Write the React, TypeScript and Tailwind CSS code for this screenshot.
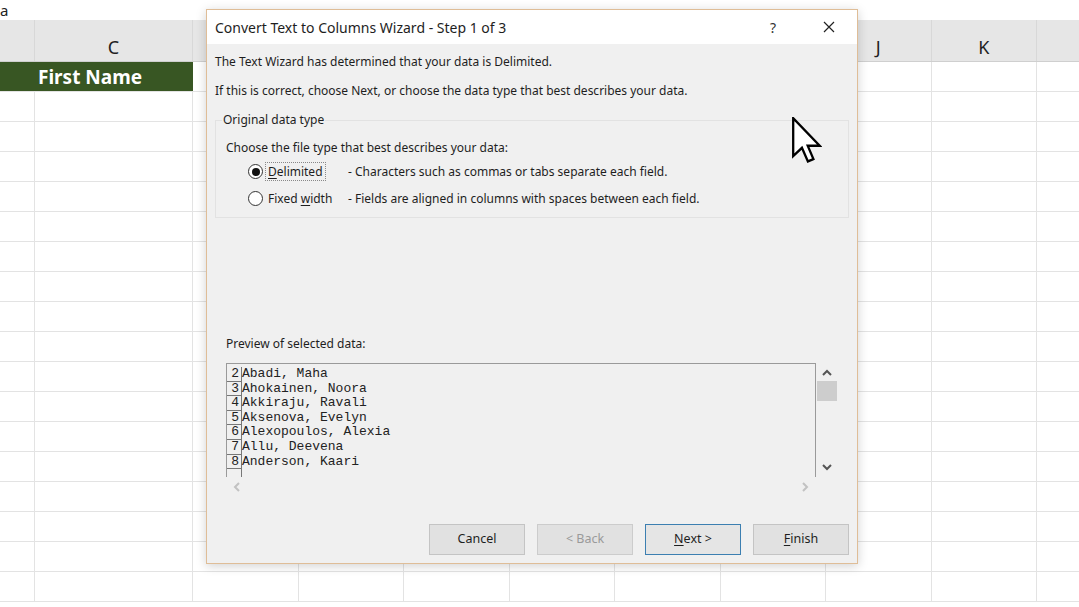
import React from 'react';

const cols = [
  { label: '', w: 35 },
  { label: 'C', w: 158 },
  { label: 'D', w: 105.5 },
  { label: 'E', w: 105.5 },
  { label: 'F', w: 105.5 },
  { label: 'G', w: 105.5 },
  { label: 'H', w: 105.5 },
  { label: 'I', w: 105.5 },
  { label: 'J', w: 105.5 },
  { label: 'K', w: 105.5 },
  { label: 'L', w: 105.5 },
];

const preview = [
  ['2', 'Abadi, Maha'],
  ['3', 'Ahokainen, Noora'],
  ['4', 'Akkiraju, Ravali'],
  ['5', 'Aksenova, Evelyn'],
  ['6', 'Alexopoulos, Alexia'],
  ['7', 'Allu, Deevena'],
  ['8', 'Anderson, Kaari'],
];

const ui = { fontFamily: '"Noto Sans", "Open Sans", sans-serif' };
const mono = { fontFamily: '"Liberation Mono", "Courier New", monospace' };

const Sheet: React.FC = () => (
  <div className="flex flex-col">
    <div className="h-[20px] bg-white text-[15px] leading-[20px] text-[#222]">a</div>
    <div className="flex h-[42px] bg-[#e6e6e6] border-b border-[#cfcfcf]">
      {cols.map((c, i) => (
        <div
          key={i}
          style={{ width: c.w }}
          className="shrink-0 border-r border-[#d8d8d8] flex items-center justify-center text-[18px] text-[#222] pt-[14px]"
        >
          {c.label}
        </div>
      ))}
    </div>
    {Array.from({ length: 18 }).map((_, r) => (
      <div key={r} className="flex h-[30px] border-b border-[#e3e3e3]">
        {cols.map((c, i) => (
          <div
            key={i}
            style={{ width: c.w }}
            className={
              r === 0 && i < 2
                ? 'shrink-0 bg-[#385623] border-r border-[#385623] flex items-center'
                : 'shrink-0 border-r border-[#e3e3e3]'
            }
          >
            {r === 0 && i === 1 && (
              <span className="pl-[3px] pt-[2px] text-white font-bold text-[19px] leading-none whitespace-nowrap">
                First Name
              </span>
            )}
          </div>
        ))}
      </div>
    ))}
  </div>
);

const Radio: React.FC<{ checked?: boolean }> = ({ checked }) => (
  <span className="w-[15px] h-[15px] rounded-full border border-[#333] bg-white flex items-center justify-center shrink-0">
    {checked && <span className="w-[8px] h-[8px] rounded-full bg-[#111]" />}
  </span>
);

const Btn: React.FC<{ children: React.ReactNode; disabled?: boolean; focus?: boolean }> = ({ children, disabled, focus }) => (
  <button
    className={
      'w-[96px] h-[31px] text-[12.5px] flex items-center justify-center ' +
      (focus
        ? 'bg-[#e5e5e5] border border-[#3c7fb1] text-[#1e1e1e]'
        : disabled
        ? 'bg-[#e1e1e1] border border-[#cccccc] text-[#9a9a9a]'
        : 'bg-[#e1e1e1] border border-[#c4c4c4] text-[#1e1e1e]')
    }
  >
    {children}
  </button>
);

const Dialog: React.FC = () => (
  <div className="absolute left-[206px] top-[9px] w-[652px] h-[555px] border border-[#dfbd97] bg-[#f0f0f0] flex flex-col shadow-[0_2px_10px_rgba(0,0,0,0.18)] text-[#1e1e1e]">
    <div className="h-[34px] bg-white flex items-center pl-[8px] shrink-0">
      <span className="flex-1 text-[14px]">Convert Text to Columns Wizard - Step 1 of 3</span>
      <span className="w-[30px] text-center text-[14px] text-[#333]">?</span>
      <span className="w-[46px] ml-[18px] mr-[5px] flex items-center justify-center">
        <svg width="12" height="12" viewBox="0 0 12 12">
          <path d="M1 1 L11 11 M11 1 L1 11" stroke="#222" strokeWidth="1.2" />
        </svg>
      </span>
    </div>
    <div className="flex-1 flex flex-col px-[8px] pb-[8px] text-[12px]">
      <div className="mt-[8px] leading-[20px]">The Text Wizard has determined that your data is Delimited.</div>
      <div className="mt-[9px] leading-[20px]">If this is correct, choose Next, or choose the data type that best describes your data.</div>
      <div className="relative mt-[19px] h-[98px] border border-[#e2e2e2] pl-[10px] pt-[17px]">
        <span className="absolute left-[6px] -top-[11px] bg-[#f0f0f0] px-[1px] leading-[20px]">Original data type</span>
        <div className="leading-[20px]">Choose the file type that best describes your data:</div>
        <div className="flex items-center h-[27px] pl-[22px]">
          <Radio checked />
          <span className="ml-[2px] w-[83px] shrink-0">
            <span className="border border-dotted border-[#888] px-[2px] leading-[17px] inline-block">
              <span className="underline underline-offset-2">D</span>elimited
            </span>
          </span>
          <span>- Characters such as commas or tabs separate each field.</span>
        </div>
        <div className="flex items-center h-[27px] pl-[22px]">
          <Radio />
          <span className="ml-[2px] w-[83px] shrink-0 pl-[3px]">
            Fixed <span className="underline underline-offset-2">w</span>idth
          </span>
          <span>- Fields are aligned in columns with spaces between each field.</span>
        </div>
      </div>
      <div className="mt-[116px] ml-[11px] leading-[20px]">Preview of selected data:</div>
      <div className="mt-[9px] ml-[11px] flex h-[114px]">
        <div className="w-[590px] border-t border-l border-r border-[#9a9a9a] flex flex-col pt-[3px] overflow-hidden">
          {preview.map(([n, t]) => (
            <div key={n} className="flex h-[14.6px] text-[13px] leading-[14.6px] text-[#222]" style={mono}>
              <span className="w-[15px] shrink-0 text-right pr-[2px] border-r border-b border-[#777]">{n}</span>
              <span className="whitespace-pre">{t}</span>
            </div>
          ))}
          <div className="flex-1 w-[15px] border-r border-[#777]" />
        </div>
        <div className="w-[21px] flex flex-col items-center">
          <svg className="mt-[6px]" width="10" height="7" viewBox="0 0 10 7">
            <path d="M1 6 L5 2 L9 6" stroke="#555" strokeWidth="2" fill="none" />
          </svg>
          <div className="mt-[5px] w-[20px] h-[20px] bg-[#cdcdcd]" />
          <div className="flex-1" />
          <svg className="mb-[6px]" width="10" height="7" viewBox="0 0 10 7">
            <path d="M1 1 L5 5 L9 1" stroke="#555" strokeWidth="2" fill="none" />
          </svg>
        </div>
      </div>
      <div className="ml-[11px] w-[590px] h-[20px] flex items-center justify-between px-[7px]">
        <svg width="7" height="10" viewBox="0 0 7 10">
          <path d="M6 1 L2 5 L6 9" stroke="#c2c2c2" strokeWidth="2" fill="none" />
        </svg>
        <svg width="7" height="10" viewBox="0 0 7 10">
          <path d="M1 1 L5 5 L1 9" stroke="#c2c2c2" strokeWidth="2" fill="none" />
        </svg>
      </div>
      <div className="mt-auto flex justify-end gap-[12px]">
        <Btn>Cancel</Btn>
        <Btn disabled>&lt; Back</Btn>
        <Btn focus>
          <span className="underline underline-offset-2">N</span>ext &gt;
        </Btn>
        <Btn>
          <span className="underline underline-offset-2">F</span>inish
        </Btn>
      </div>
    </div>
  </div>
);

const Pointer: React.FC = () => (
  <svg className="absolute left-[792px] top-[117px]" width="30" height="46" viewBox="0 0 13 20">
    <path
      d="M0.5 0.5 L0.5 17 L4.3 13.4 L6.9 19.3 L9.3 18.3 L6.8 12.5 L12 12.5 Z"
      fill="white"
      stroke="black"
      strokeWidth="1"
      strokeLinejoin="miter"
    />
  </svg>
);

const App: React.FC = () => (
  <div className="relative w-[1079px] h-[607px] overflow-hidden bg-white" style={ui}>
    <Sheet />
    <Dialog />
    <Pointer />
  </div>
);

export default App;
